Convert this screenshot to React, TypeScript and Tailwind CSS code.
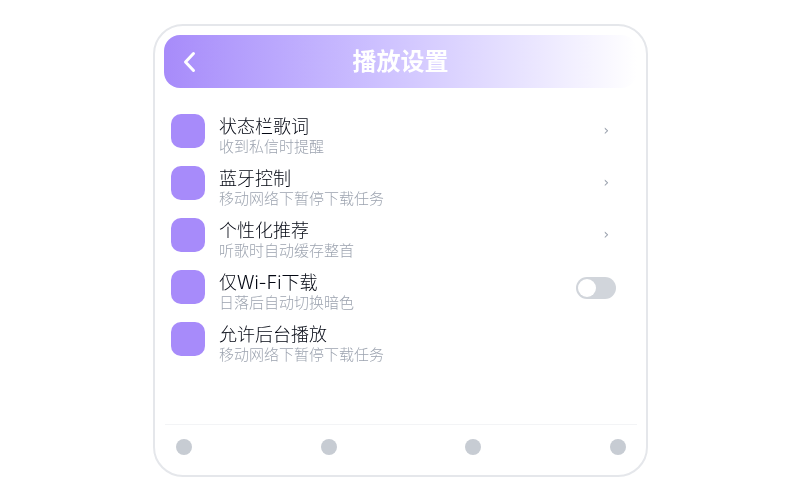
const rows = [
  { title: "状态栏歌词", sub: "收到私信时提醒", right: "arrow" },
  { title: "蓝牙控制", sub: "移动网络下暂停下载任务", right: "arrow" },
  { title: "个性化推荐", sub: "听歌时自动缓存整首", right: "arrow" },
  { title: "仅Wi-Fi下载", sub: "日落后自动切换暗色", right: "switch" },
  { title: "允许后台播放", sub: "移动网络下暂停下载任务", right: "" },
];

export default function App() {
  return (
    <div className="w-[800px] h-[500px] bg-white flex items-center justify-center font-['Inter','Noto_Sans_CJK_SC',sans-serif]">
      <div className="ml-px mt-px w-[495px] h-[453px] border-2 border-[#e5e7eb] rounded-[30px] bg-white p-[9px] flex flex-col blur-[0.3px]">
        <div className="relative h-[53px] shrink-0 rounded-2xl bg-gradient-to-r from-[#a78bfa] to-white flex items-center justify-center">
          <svg className="absolute left-[18px] top-[16px]" width="14" height="22" viewBox="0 0 14 22" fill="none">
            <path d="M11.5 2.5 L3.5 11 L11.5 19.5" stroke="white" strokeWidth="3" strokeLinecap="round" strokeLinejoin="round" />
          </svg>
          <span className="text-2xl font-bold text-white leading-none">播放设置</span>
        </div>

        <div className="flex-1 pt-[26px] pl-[7px] pr-[21px] flex flex-col gap-[6px]">
          {rows.map((row) => (
            <div key={row.title} className="h-[46px] flex items-start">
              <div className="w-[34px] h-[34px] rounded-[10px] bg-[#a78bfa] shrink-0"></div>
              <div className="ml-[14px] flex-1 flex flex-col">
                <span className="mt-px text-lg leading-[24px] text-[#030712] font-light">{row.title}</span>
                <span className="text-[15px] leading-[15px] text-[#9ca3af] font-light">{row.sub}</span>
              </div>
              {row.right === "arrow" && (
                <span className="mr-[7px] mt-[6px] font-['DejaVu_Sans'] text-sm leading-5 text-[#9ca3af]">›</span>
              )}
              {row.right === "switch" && (
                <div className="mt-[7px] w-10 h-[22px] rounded-full bg-[#d1d5db] p-[2px]">
                  <div className="w-[18px] h-[18px] rounded-full bg-white"></div>
                </div>
              )}
            </div>
          ))}
        </div>

        <div className="h-[42px] shrink-0 ml-px border-t border-[#f3f4f6] pl-[11px] pr-[11px] pt-[14px] flex items-start justify-between">
          <div className="w-4 h-4 rounded-full bg-[#c7ccd3]"></div>
          <div className="w-4 h-4 rounded-full bg-[#c7ccd3]"></div>
          <div className="w-4 h-4 rounded-full bg-[#c7ccd3]"></div>
          <div className="w-4 h-4 rounded-full bg-[#c7ccd3]"></div>
        </div>
      </div>
    </div>
  );
}
